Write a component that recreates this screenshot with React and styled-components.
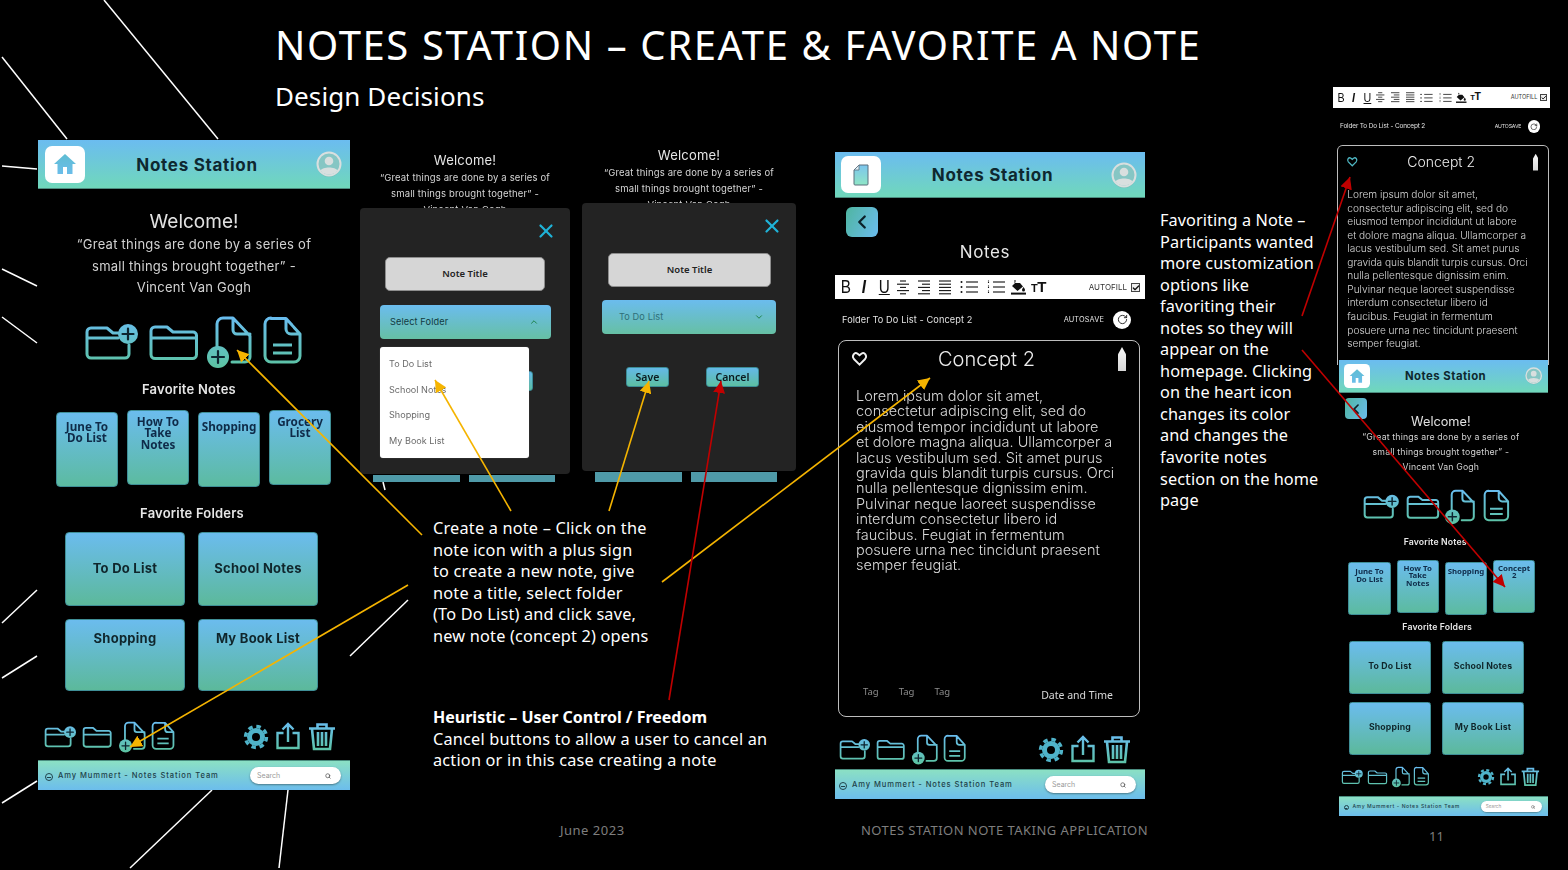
import React from 'react';
import styled, { createGlobalStyle } from 'styled-components';
import { X, ChevronUp, ChevronDown, ChevronLeft, Search, RotateCw, Check } from 'lucide-react';

const Global = createGlobalStyle`
  html, body { margin: 0; padding: 0; background: #000; width: 1568px; height: 870px; overflow: hidden; }
  * { box-sizing: border-box; }
`;

const BLUE = '#69bdf0';
const GREEN = '#5cc3a2';
const SANS = '"Noto Sans", "Liberation Sans", sans-serif';
const MOCK = 'Inter, "Noto Sans", sans-serif';

const Slide = styled.main`
  position: relative; width: 1568px; height: 870px; background: #000; color: #fff;
  font-family: ${SANS}; overflow: hidden;
`;
const Heading = styled.header`padding: 20px 0 0 275px;`;
const Title = styled.h1`
  margin: 0; font-size: 40px; line-height: 50px; font-weight: 400; letter-spacing: 1.6px; white-space: nowrap;
`;
const Subtitle = styled.h2`
  margin: 1px 0 0; font-size: 26px; line-height: 50px; font-weight: 400; letter-spacing: .1px; white-space: nowrap;
`;
const Placed = styled.div`
  position: absolute; left: ${p => p.$x}px; top: ${p => p.$y}px;
`;
const Scaled = styled.div`zoom: ${p => p.$zoom || 1}; filter: blur(.3px);`;
const Lines = styled.div`
  font-size: 16.3px; line-height: 21.55px; white-space: nowrap; letter-spacing: ${p => p.$ls}px;
  span { display: block; }
  strong { display: block; font-weight: 700; font-size: 16px; letter-spacing: 0; }
`;
const Muted = styled.div`color: #7e7e7e; font-size: 13px; letter-spacing: ${p => p.$ls || 0}px; white-space: nowrap;`;

const Overlay = styled.svg`position: absolute; left: 0; top: 0; width: 1568px; height: 870px; pointer-events: none;`;
const Defs = styled.svg`position: absolute; width: 0; height: 0;`;

/* phone frame */
const Phone = styled.section`
  width: ${p => p.$w}px; height: ${p => p.$h}px; display: flex; flex-direction: column;
`;
const AppBar = styled.div`
  height: ${p => p.$h}px; flex: none; display: flex; align-items: center; justify-content: space-between;
  padding: 0 8px 0 ${p => p.$pl}px; background: linear-gradient(#6bbcf0, #70d8bb);
  border-bottom: 1px solid #4d8c80;
`;
const HomeTile = styled.div`
  width: 40px; height: 37px; background: #fff; border-radius: 7px; display: grid; place-items: center; flex: none;
`;
const AppTitle = styled.div`
  flex: 1; text-align: center; padding-right: 7px; padding-top: 1px; font: 700 17px/20px ${MOCK}; color: #0e2830; letter-spacing: .7px;
`;
const Back = styled.div`
  width: ${p => p.$w}px; height: ${p => p.$h}px; margin: ${p => p.$mt}px 0 ${p => p.$mb}px ${p => p.$ml}px;
  border-radius: 6px; background: linear-gradient(115deg, #4fb5a0, #6bbcee); display: grid; place-items: center;
  color: #0c2129; flex: none;
`;
const Welcome = styled.div`
  margin-top: ${p => p.$mt}px; text-align: center; font: 400 19px/24px ${MOCK}; color: #e2e2e2; padding-right: ${p => p.$pr}px;
`;
const Quote = styled.div`
  text-align: center; font: 400 13px/${p => p.$lh}px ${MOCK}; color: #d2d2d2; letter-spacing: .25px;
  padding-right: ${p => p.$pr}px;
  span { display: block; }
`;
const IconRow = styled.div`
  display: flex; justify-content: ${p => p.$j || 'flex-start'}; align-items: flex-start; flex: none;
  margin-top: ${p => p.$mt}px; padding: ${p => p.$pad || 0};
`;
const IconGroup = styled.div`display: flex; align-items: flex-start; gap: ${p => p.$gap}px;`;
const Svg = styled.svg`display: block; flex: none; overflow: visible; margin-left: ${p => p.$ml || 0}px;`;
const SectionLabel = styled.div`
  margin-top: ${p => p.$mt}px; text-align: center; font: 600 13px/18px ${MOCK}; color: #e6e6e6; letter-spacing: .2px;
  padding-right: ${p => p.$pr || 0}px;
`;
const NotesLabel = styled.div`
  margin-top: 3px; padding-right: 10px; text-align: center; font: 400 17px/25px ${MOCK}; color: #e8e8e8; letter-spacing: .6px;
`;
const TileRow = styled.div`
  display: flex; gap: 9px; align-items: flex-start; margin-top: ${p => p.$mt}px; padding-left: ${p => p.$pl}px; flex: none;
`;
const Tile = styled.div`
  width: ${p => p.$w}px; height: ${p => p.$h}px; margin-top: ${p => p.$lift ? 0 : 2}px; border-radius: 4px;
  background: linear-gradient(#6bbcee, #5cbba0); border: 1px solid #3f8f97;
  padding-top: ${p => p.$lift ? 5 : 8}px; text-align: center; font: 700 11.7px/11.5px ${SANS}; color: #0f2b49;
  span { display: block; }
`;
const CardGrid = styled.div`
  display: grid; grid-template-columns: repeat(2, ${p => p.$w}px); column-gap: ${p => p.$cg}px; row-gap: 13px;
  margin-top: ${p => p.$mt}px; padding-left: ${p => p.$pl}px; flex: none;
`;
const FolderCard = styled.div`
  height: ${p => p.$h}px; border-radius: 4px; background: linear-gradient(#6bbcee, #5cb99b); border: 1px solid #3f8f97;
  display: flex; justify-content: center; align-items: ${p => p.$top ? 'flex-start' : 'center'};
  padding-top: ${p => p.$top ? 10 : 0}px; padding-bottom: ${p => p.$top ? 0 : 2}px; font: 700 13px/16px ${MOCK}; color: #10262c; letter-spacing: .25px;
`;
const BottomBar = styled.footer`
  margin-top: auto; height: 30px; flex: none; display: flex; align-items: center; gap: 5px; padding: 0 9px 0 ${p => p.$pl}px;
  background: linear-gradient(#8be0c4, #6cbdec); border-top: 1px solid #4a8d80;
`;
const BarDot = styled.span`
  position: relative; width: 8px; height: 8px; border-radius: 50%; border: 1px solid #20424a; margin-top: 3px; flex: none;
  &::after { content: ''; position: absolute; left: 1px; right: 1px; top: 2.5px; height: 1px; background: #20424a; }
`;
const BarText = styled.span`
  flex: 1; font: 500 7.6px/10px ${MOCK}; letter-spacing: .9px; color: #1d3f49; white-space: nowrap;
`;
const SearchPill = styled.div`
  width: 91px; height: 17px; border-radius: 9px; background: #fff; box-shadow: 0 1px 2px #4b7b8b; display: flex;
  align-items: center; justify-content: space-between; padding: 0 10px 0 7px; font: 400 7px/10px ${MOCK}; color: #9a9a9a; flex: none;
`;

/* modal */
const Greeting = styled.div`width: ${p => p.$w}px; text-align: center; color: #e6e6e6;`;
const GreetTitle = styled.div`font: 400 13px/20px ${MOCK}; letter-spacing: .2px;`;
const GreetLines = styled.div`
  font: 400 9.5px/16px ${MOCK}; color: #d5d5d5; letter-spacing: .15px; white-space: nowrap;
  span { display: block; }
`;
const Dialog = styled.div`
  position: relative; width: ${p => p.$w}px; height: ${p => p.$h}px; margin-top: -10px; background: #232323; border-radius: 4px;
  padding-top: 12px; display: flex; flex-direction: column;
`;
const Close = styled.div`align-self: flex-end; margin-right: 13px; height: 18px; color: #1fb3d8; display: flex;`;
const TitleInput = styled.div`
  margin: ${p => p.$mt}px 0 0 ${p => p.$ml}px; width: ${p => p.$w}px; height: 34px; background: #d6d6d6; border: 1px solid #8d8d8d;
  border-radius: 5px; display: grid; place-items: center; font: 600 9.5px/12px ${SANS}; color: #232323;
`;
const SelectBox = styled.div`
  margin: ${p => p.$mt}px 0 0 20px; width: ${p => p.$w}px; height: 34px; border-radius: 4px;
  background: linear-gradient(#6bbcee, #66c0a4); display: flex; align-items: center; justify-content: space-between;
  padding: 0 12px 0 ${p => p.$pl}px; font: 400 9.2px/12px ${MOCK}; color: ${p => p.$c}; letter-spacing: .1px;
`;
const Actions = styled.div`display: flex; gap: 37px; margin: ${p => p.$mt}px 0 0 ${p => p.$ml}px;`;
const ActionBtn = styled.div`
  width: ${p => p.$w}px; height: 20px; border-radius: 3px; background: linear-gradient(#64b8e8, #5cbfa2); border: 1px solid #3b8c96;
  display: grid; place-items: center; font: 600 10.5px/12px ${SANS}; color: #0b1a20;
`;
const Menu = styled.div`
  position: absolute; left: 20px; top: 139px; width: 149px; height: 111px; background: #fff; border-radius: 3px; padding: 4px 9px;
  box-shadow: 0 0 1px #777;
`;
const MenuItem = styled.div`font: 400 9.1px/25.7px ${MOCK}; color: #6a6a6a;`;
const Stubs = styled.div`display: flex; gap: 9px; margin: ${p => p.$mt}px 0 0 13px;`;
const Stub = styled.div`width: 86.5px; height: ${p => p.$h}px; background: #4f9aa8;`;

/* note editor */
const Toolbar = styled.div`
  height: ${p => p.$h}px; width: 310px; margin-top: ${p => p.$mt}px; flex: none; background: #fff; display: flex; align-items: center;
  padding: 0 5px; color: #111; gap: 9px;
`;
const Fmt = styled.span`
  font: ${p => p.$i ? 'italic' : 'normal'} 400 18px/20px "Liberation Sans", sans-serif; width: 10px; text-align: center;
  text-decoration: ${p => p.$u ? 'underline' : 'none'}; transform: scaleX(.85); font-weight: ${p => p.$i ? 700 : 400};
`;
const BigT = styled.span`
  margin-left: -4px; font: 700 15px/15px "Liberation Sans", sans-serif; letter-spacing: -.5px; small { font-size: 11px; }
`;
const Autofill = styled.span`
  margin-left: auto; display: flex; align-items: center; gap: 4px; font: 400 8px/10px ${MOCK}; color: #333;
`;
const CheckBox = styled.span`
  width: 9px; height: 9px; border: 1px solid #444; display: grid; place-items: center; background: #eee; color: #111;
`;
const PathRow = styled.div`
  height: ${p => p.$h}px; display: flex; align-items: center; justify-content: space-between; padding: 0 14px 0 ${p => p.$pl}px;
  font: 400 9.2px/12px ${MOCK}; color: #e2e2e2; letter-spacing: ${p => p.$ls}px; white-space: nowrap; flex: none;
`;
const AutoSave = styled.span`display: flex; align-items: center; gap: 9px; font-size: 7.4px;`;
const SaveDot = styled.span`
  width: 18px; height: 18px; border-radius: 50%; background: #fff; color: #222; display: grid; place-items: center;
`;
const NoteCard = styled.article`
  margin-left: ${p => p.$ml}px; width: 302px; height: ${p => p.$h}px; display: flex; flex-direction: column; flex: none;
  border: 1px solid #bdbdbd; border-radius: 8px; ${p => p.$open ? 'border-bottom: 0; border-radius: 8px 8px 0 0;' : ''}
`;
const NoteHead = styled.div`
  height: 24px; margin-top: ${p => p.$mt}px; display: flex; align-items: center; justify-content: space-between; padding: 0 13px; flex: none;
`;
const NoteName = styled.div`
  flex: 1; text-align: center; padding-right: 12px; font: 300 20px/24px ${MOCK}; color: #ececec;
`;
const Pencil = styled.div`
  width: 8px; height: 24px; background: linear-gradient(#f8f8f8, #d6d6d6); clip-path: polygon(50% 0, 100% 30%, 100% 100%, 0 100%, 0 30%);
`;
const NoteBody = styled.div`
  margin-top: ${p => p.$mt}px; padding-left: ${p => p.$pl}px; font: 300 ${p => p.$fs}px/${p => p.$lh}px ${MOCK}; color: #d8d8d8;
  white-space: nowrap; span { display: block; }
`;
const NoteMeta = styled.div`
  margin-top: auto; display: flex; justify-content: space-between; align-items: flex-end; padding: 0 26px 15px 24px;
  font: 400 10.5px/12px ${SANS}; color: #d8d8d8;
`;
const Tags = styled.div`display: flex; gap: 20px; padding-bottom: 3px; font-size: 9.5px; color: #8d8d8d;`;

const QUOTE = ['“Great things are done by a series of', 'small things brought together” -', 'Vincent Van Gogh'];
const BODY = [
  'Lorem ipsum dolor sit amet,', 'consectetur adipiscing elit, sed do', 'eiusmod tempor incididunt ut labore',
  'et dolore magna aliqua. Ullamcorper a', 'lacus vestibulum sed. Sit amet purus', 'gravida quis blandit turpis cursus. Orci',
  'nulla pellentesque dignissim enim.', 'Pulvinar neque laoreet suspendisse', 'interdum consectetur libero id',
  'faucibus. Feugiat in fermentum', 'posuere urna nec tincidunt praesent', 'semper feugiat.',
];

const NAVY = '#0d2530';
const FolderPlusIcon = ({ h }) => (
  <Svg width={h} height={h} viewBox="0 0 52 52" fill="none" stroke="url(#g52)" strokeWidth="3" strokeLinecap="round" strokeLinejoin="round">
    <path d="M34 16H27L21 11H5a4 4 0 0 0-4 4V37a4 4 0 0 0 4 4H39a4 4 0 0 0 4-4V28M2 21H32" />
    <circle cx="42" cy="17" r="10" fill="url(#g52)" stroke="none" />
    <path d="M42 11.5V22.5M36.5 17H47.5" stroke={NAVY} strokeWidth="2.2" />
  </Svg>
);
const FolderIcon = ({ h, ml }) => (
  <Svg $ml={ml} width={48 * h / 52} height={h} viewBox="0 0 48 52" fill="none" stroke="url(#g52)" strokeWidth="3" strokeLinejoin="round">
    <path d="M5 10H17L23 15H43a3.5 3.5 0 0 1 3.5 3.5V37.5a4 4 0 0 1-4 4H5a4 4 0 0 1-4-4V14a4 4 0 0 1 4-4ZM1 21H46" />
  </Svg>
);
const FilePlusIcon = ({ h, ml }) => (
  <Svg $ml={ml} width={44 * h / 52} height={h} viewBox="0 0 44 52" fill="none" stroke="url(#g52)" strokeWidth="3" strokeLinejoin="round" strokeLinecap="round">
    <path d="M10 30V7a6 6 0 0 1 6-6H26L43 19V40a5 5 0 0 1-5 5H25M26 1V13a4 4 0 0 0 4 4H43" />
    <circle cx="11" cy="40" r="11" fill="url(#g52)" stroke="none" />
    <path d="M11 34V46M5 40H17" stroke={NAVY} strokeWidth="2.2" />
  </Svg>
);
const FileIcon = ({ h, ml }) => (
  <Svg $ml={ml} width={37 * h / 52} height={h} viewBox="0 0 37 52" fill="none" stroke="url(#g52)" strokeWidth="3" strokeLinejoin="round">
    <path d="M7 1.5H22L36 17V39a6 6 0 0 1-6 6H7a6 6 0 0 1-6-6V7a6 6 0 0 1 6-6ZM22 1.5V12a5 5 0 0 0 5 5H36M9 28H28M9 36H28" />
  </Svg>
);
const GearIcon = () => (
  <Svg width="24" height="30" viewBox="0 0 24 30" fill="none" stroke="#4fb3c9">
    <circle cx="12" cy="15" r="6.5" strokeWidth="5" />
    <circle cx="12" cy="15" r="10.5" strokeWidth="3.4" strokeDasharray="4.5 3.75" />
  </Svg>
);
const ShareIcon = () => (
  <Svg width="24" height="30" viewBox="0 0 24 30" fill="none" stroke="url(#g30)" strokeWidth="2.4">
    <path d="M7.5 11H1.5V26H22.5V11H16.5M12 20V2M6.5 7.5L12 2L17.5 7.5" />
  </Svg>
);
const TrashIcon = () => (
  <Svg width="28" height="30" viewBox="0 0 28 30" fill="none" stroke="url(#g30)" strokeWidth="2.6">
    <path d="M1 6.5H27M9.5 6V2.5H18.5V6M4 7L6 27H22L24 7M10 10V24M14 10V24M18 10V24" />
  </Svg>
);
const HomeIcon = () => (
  <Svg width="24" height="24" viewBox="0 0 24 24"><path fill="url(#g24)" d="M12 2L1 12h3.5v10H10v-7h4v7h5.5V12H23z" /></Svg>
);
const TinyFile = () => (
  <Svg width="17" height="22" viewBox="0 0 17 22">
    <path fill="url(#gmint)" stroke="#5a6f7d" strokeWidth="1" d="M6 1H15V20a1 1 0 0 1-1 1H2a1 1 0 0 1-1-1V6Z" />
    <path fill="#dfeff5" stroke="#5a6f7d" strokeWidth=".8" d="M6 1V6H1Z" />
  </Svg>
);
const Avatar = () => (
  <Svg width="26" height="26" viewBox="0 0 26 26">
    <circle cx="13" cy="14" r="12" fill="#7f9f98" opacity=".35" />
    <circle cx="13" cy="13" r="11.5" fill="#86c6c4" stroke="#d9dfdf" strokeWidth="2" />
    <circle cx="13" cy="10" r="4.3" fill="#d9dfdf" />
    <path d="M4.5 19.5c2-4 15-4 17 0a11 11 0 0 1-17 0Z" fill="#d9dfdf" />
  </Svg>
);
const Heart = ({ color }) => (
  <Svg width="15" height="14" viewBox="0 0 24 22" fill="none" stroke={color} strokeWidth="3">
    <path d="M12 20L3 11C-1 6 4-1 9 2.5L12 5L15 2.5C20-1 25 6 21 11Z" />
  </Svg>
);

const Bars = ({ rows, w = 12 }) => (
  <Svg width={w} height="15" viewBox={`0 0 ${w} 15`} stroke="#111" strokeWidth="1.1">
    {rows.map(([a, b], i) => <line key={i} x1={a} x2={b} y1={1 + i * 3.2} y2={1 + i * 3.2} />)}
  </Svg>
);
const ListGlyph = ({ numbered }) => (
  <Svg width="18" height="14" viewBox="0 0 18 14" stroke="#111" strokeWidth="1.1">
    {[2, 7, 12].map(y => (
      <g key={y}>
        {numbered
          ? <path d={`M1.5 ${y - 1.6}V${y + 1.6}`} strokeDasharray="1 .6" />
          : <circle cx="1.5" cy={y} r="1" fill="#111" stroke="none" />}
        <line x1="6" x2="18" y1={y} y2={y} />
      </g>
    ))}
  </Svg>
);
const Bucket = () => (
  <Svg $ml={-3} width="15" height="16" viewBox="0 0 15 16">
    <path fill="#111" d="M4 1L5 2L3 4L9 4L12 7.5L6.5 12L1 7L4.5 3.5L3 2ZM12.5 8c1 1.5 1.5 2.2 1.5 3a1.4 1.4 0 0 1-3 0c0-.8.5-1.5 1.5-3Z" />
    <rect x="0" y="13.6" width="15" height="2" fill="#111" />
  </Svg>
);

const Format = ({ h, mt }) => (
  <Toolbar $h={h} $mt={mt}>
    <Fmt>B</Fmt><Fmt $i>I</Fmt><Fmt $u>U</Fmt>
    <Bars rows={[[3, 9], [0, 12], [3, 9], [0, 12], [3, 9]]} />
    <Bars rows={[[0, 12], [4, 12], [0, 12], [4, 12], [0, 12]]} />
    <Bars rows={[[0, 12], [0, 12], [0, 12], [0, 12], [0, 12]]} />
    <ListGlyph /><ListGlyph numbered /><Bucket />
    <BigT><small>T</small>T</BigT>
    <Autofill>AUTOFILL<CheckBox><Check size={8} strokeWidth={4} /></CheckBox></Autofill>
  </Toolbar>
);

const Editor = ({ heartColor, toolbarMt = 0, pathH, pathPl, pathLs, cardMl, cardH, headMt, bodyMt, bodyPl, lh, open, toolbarH }) => (
  <>
    <Format h={toolbarH} mt={toolbarMt} />
    <PathRow $h={pathH} $pl={pathPl} $ls={pathLs}>
      <span>Folder To Do List - Concept 2</span>
      <AutoSave>AUTOSAVE<SaveDot><RotateCw size={11} strokeWidth={2} /></SaveDot></AutoSave>
    </PathRow>
    <NoteCard $ml={cardMl} $h={cardH} $open={open}>
      <NoteHead $mt={headMt}>
        <Heart color={heartColor} />
        <NoteName>Concept 2</NoteName>
        <Pencil />
      </NoteHead>
      <NoteBody $mt={bodyMt} $pl={bodyPl} $fs={14.5} $lh={lh}>
        {BODY.map(l => <span key={l}>{l}</span>)}
      </NoteBody>
      {!open && (
        <NoteMeta>
          <Tags><span>Tag</span><span>Tag</span><span>Tag</span></Tags>
          <span>Date and Time</span>
        </NoteMeta>
      )}
    </NoteCard>
  </>
);

const Tools = ({ h = 31, mt, pad }) => (
  <IconRow $mt={mt} $pad={pad} $j="space-between">
    <IconGroup $gap={7}>
      <FolderPlusIcon h={h} /><FolderIcon h={h} /><FilePlusIcon h={h} /><FileIcon h={h} />
    </IconGroup>
    <IconGroup $gap={8}>
      <GearIcon /><ShareIcon /><TrashIcon />
    </IconGroup>
  </IconRow>
);

const Footer = ({ pl = 7 }) => (
  <BottomBar $pl={pl}>
    <BarDot />
    <BarText>Amy Mummert - Notes Station Team</BarText>
    <SearchPill>Search<Search size={6} strokeWidth={3} color="#555" /></SearchPill>
  </BottomBar>
);

const HomeScreen = ({ s, fourth }) => (
  <Phone $w={312} $h={s.h}>
    <AppBar $h={49} $pl={7}>
      <HomeTile><HomeIcon /></HomeTile>
      <AppTitle>Notes Station</AppTitle>
      <Avatar />
    </AppBar>
    {s.back && <Back $w={33} $h={31} $mt={8} $mb={-8} $ml={9}><ChevronLeft size={24} strokeWidth={2.5} /></Back>}
    <Welcome $mt={s.welcome} $pr={s.textPr}>Welcome!</Welcome>
    <Quote $lh={s.quoteLh} $pr={s.textPr}>{QUOTE.map(l => <span key={l}>{l}</span>)}</Quote>
    <IconRow $mt={s.icons} $pad={s.iconPad}>
      <FolderPlusIcon h={52} />
      <FolderIcon h={52} ml={12} />
      <FilePlusIcon h={52} ml={9} />
      <FileIcon h={52} ml={13} />
    </IconRow>
    <SectionLabel $mt={s.favNotes} $pr={s.labelPr}>Favorite Notes</SectionLabel>
    <TileRow $mt={s.tiles} $pl={s.tilePl}>
      <Tile $w={s.tileW} $h={s.tileH}><span>June To</span><span>Do List</span></Tile>
      <Tile $w={s.tileW} $h={s.tileH} $lift><span>How To</span><span>Take</span><span>Notes</span></Tile>
      <Tile $w={s.tileW} $h={s.tileH}><span>Shopping</span></Tile>
      <Tile $w={s.tileW} $h={s.tileH} $lift>{fourth.map(l => <span key={l}>{l}</span>)}</Tile>
    </TileRow>
    <SectionLabel $mt={s.favFolders} $pr={s.labelPr - 6}>Favorite Folders</SectionLabel>
    <CardGrid $mt={s.cards} $pl={s.cardPl} $w={s.cardW} $cg={s.cardGap}>
      <FolderCard $h={s.row1}>To Do List</FolderCard>
      <FolderCard $h={s.row1}>School Notes</FolderCard>
      <FolderCard $h={s.row2} $top={s.topText}>Shopping</FolderCard>
      <FolderCard $h={s.row2} $top={s.topText}>My Book List</FolderCard>
    </CardGrid>
    <Tools mt={s.tools} pad={s.toolPad} />
    <Footer />
  </Phone>
);

const Modal = ({ at, w, h, input, select, actions, stubMt, stubH, children }) => (
  <Placed $x={at.x} $y={at.y}>
    <Scaled>
      <Greeting $w={w}>
        <GreetTitle>Welcome!</GreetTitle>
        <GreetLines>{QUOTE.map(l => <span key={l}>{l}</span>)}</GreetLines>
      </Greeting>
      <Dialog $w={w} $h={h}>
        <Close><X size={22} strokeWidth={2.4} /></Close>
        <TitleInput $mt={input.mt} $ml={input.ml} $w={input.w}>Note Title</TitleInput>
        {select}
        <Actions $mt={actions.mt} $ml={actions.ml}>
          <ActionBtn $w={43}>Save</ActionBtn>
          <ActionBtn $w={53}>Cancel</ActionBtn>
        </Actions>
        {children}
      </Dialog>
      <Stubs $mt={stubMt}><Stub $h={stubH} /><Stub $h={stubH} /></Stubs>
    </Scaled>
  </Placed>
);

const LEFT = {
  h: 650, back: false, welcome: 21, textPr: 0, quoteLh: 21.5, icons: 18, iconPad: '0 0 0 48px', favNotes: 11, labelPr: 10, tiles: 12, tilePl: 18,
  tileW: 62, tileH: 75, favFolders: 17, cards: 10, cardPl: 27, cardW: 120, cardGap: 13, row1: 74, row2: 72, topText: true,
  tools: 31, toolPad: '0 14px 0 7px',
};
const RIGHT = {
  h: 681, back: true, welcome: 0, textPr: 8, quoteLh: 23, icons: 21, iconPad: '0 0 0 38px', favNotes: 16, labelPr: 25, tiles: 19, tilePl: 14,
  tileW: 63, tileH: 79, favFolders: 10, cards: 12, cardPl: 15, cardW: 122, cardGap: 17, row1: 78, row2: 78, topText: false,
  tools: 18, toolPad: '0 12px 0 5px',
};

const WHITE_LINES = [
  [2, 57, 67, 139], [104, 0, 218, 139], [2, 166, 37, 169], [2, 269, 37, 286], [2, 317, 37, 343], [2, 623, 37, 590],
  [2, 678, 37, 656], [2, 803, 37, 781], [130, 868, 212, 790], [279, 868, 288, 790], [350, 656, 408, 600], [383, 482, 385, 490],
];
const ARROWS = [
  [422, 535, 237, 350, 'y'], [408, 585, 130, 747, 'y'], [511, 511, 435, 380, 'y'], [609, 511, 649, 381, 'y'], [662, 582, 930, 378, 'y'],
  [669, 700, 721, 381, 'r'], [1302, 316, 1350, 177, 'r'], [1302, 350, 1505, 587, 'r'],
];

export default function App() {
  return (
    <Slide>
      <Global />
      <Defs aria-hidden="true">
        <defs>
          <linearGradient id="g52" gradientUnits="userSpaceOnUse" x1="0" y1="0" x2="0" y2="50"><stop stopColor={BLUE} /><stop offset="1" stopColor={GREEN} /></linearGradient>
          <linearGradient id="g30" gradientUnits="userSpaceOnUse" x1="0" y1="0" x2="0" y2="30"><stop stopColor={BLUE} /><stop offset="1" stopColor={GREEN} /></linearGradient>
          <linearGradient id="g24" gradientUnits="userSpaceOnUse" x1="0" y1="0" x2="0" y2="24"><stop stopColor="#5dbdd0" /><stop offset="1" stopColor="#6cbdec" /></linearGradient>
          <linearGradient id="gmint" x1="0" y1="0" x2="0" y2="1"><stop stopColor="#7cc5ee" /><stop offset="1" stopColor="#8fe6c6" /></linearGradient>
          <marker id="ay" markerUnits="userSpaceOnUse" markerWidth="13" markerHeight="12" refX="12" refY="6" orient="auto"><path d="M0 0L12 6L0 12Z" fill="#f5b400" /></marker>
          <marker id="ar" markerUnits="userSpaceOnUse" markerWidth="13" markerHeight="12" refX="12" refY="6" orient="auto"><path d="M0 0L12 6L0 12Z" fill="#c00000" /></marker>
        </defs>
      </Defs>

      <Overlay aria-hidden="true">
        {WHITE_LINES.map(([a, b, c, d]) => <line key={`${a}-${b}`} x1={a} y1={b} x2={c} y2={d} stroke="#fff" strokeWidth="1.5" />)}
      </Overlay>

      <Heading>
        <Title>NOTES STATION – CREATE &amp; FAVORITE A NOTE</Title>
        <Subtitle>Design Decisions</Subtitle>
      </Heading>

      <Placed $x={38} $y={140}>
        <Scaled><HomeScreen s={LEFT} fourth={['Grocery', 'List']} /></Scaled>
      </Placed>

      <Modal
        at={{ x: 360, y: 150 }} w={210} h={266} input={{ mt: 19, ml: 25, w: 160 }} actions={{ mt: 32, ml: 40 }} stubMt={1} stubH={7}
        select={<SelectBox $mt={14} $w={171} $pl={10} $c="#123a3f">Select Folder<ChevronUp size={10} color="#173" /></SelectBox>}
      >
        <Menu>
          <MenuItem>To Do List</MenuItem><MenuItem>School Notes</MenuItem><MenuItem>Shopping</MenuItem><MenuItem>My Book List</MenuItem>
        </Menu>
      </Modal>
      <Modal
        at={{ x: 582, y: 145 }} w={214} h={268} input={{ mt: 20, ml: 26, w: 163 }} actions={{ mt: 33, ml: 44 }} stubMt={1} stubH={10}
        select={<SelectBox $mt={13} $w={174} $pl={17} $c="#2f6f7a">To Do List<ChevronDown size={10} color="#173" /></SelectBox>}
      />

      <Placed $x={835} $y={152}>
        <Scaled>
          <Phone $w={310} $h={647}>
            <AppBar $h={46} $pl={6}>
              <HomeTile><TinyFile /></HomeTile>
              <AppTitle>Notes Station</AppTitle>
              <Avatar />
            </AppBar>
            <Back $w={32} $h={30} $mt={9} $mb={0} $ml={11}><ChevronLeft size={22} strokeWidth={2.5} /></Back>
            <NotesLabel>Notes</NotesLabel>
            <Editor
              heartColor="#f0f0f0" toolbarMt={10} toolbarH={24} pathH={41} pathPl={7} pathLs={0.1} cardMl={3} cardH={377} headMt={6} bodyMt={17} bodyPl={17} lh={15.4}
            />
            <Tools mt={18} pad="0 14px 0 5px" h={30} />
            <Footer pl={4} />
          </Phone>
        </Scaled>
      </Placed>

      <Placed $x={433} $y={518}>
        <Lines $ls={0.2}>
          <span>Create a note – Click on the</span>
          <span>note icon with a plus sign</span>
          <span>to create a new note, give</span>
          <span>note a title, select folder</span>
          <span>(To Do List) and click save,</span>
          <span>new note (concept 2) opens</span>
        </Lines>
      </Placed>
      <Placed $x={433} $y={707}>
        <Lines $ls={0.2}>
          <strong>Heuristic – User Control / Freedom</strong>
          <span>Cancel buttons to allow a user to cancel an</span>
          <span>action or in this case creating a note</span>
        </Lines>
      </Placed>
      <Placed $x={1160} $y={210}>
        <Lines $ls={0.08}>
          <span>Favoriting a Note –</span><span>Participants wanted</span><span>more customization</span><span>options like</span>
          <span>favoriting their</span><span>notes so they will</span><span>appear on the</span><span>homepage. Clicking</span>
          <span>on the heart icon</span><span>changes its color</span><span>and changes the</span><span>favorite notes</span>
          <span>section on the home</span><span>page</span>
        </Lines>
      </Placed>

      <Placed $x={1333} $y={87}>
        <Scaled $zoom={0.7}>
          <Editor
            heartColor="#4fb6c2" toolbarH={30} pathH={53} pathPl={10} pathLs={-0.2} cardMl={6} cardH={314} headMt={11} bodyMt={25} bodyPl={13} lh={19.35} open
          />
        </Scaled>
      </Placed>
      <Placed $x={1339} $y={360}>
        <Scaled $zoom={0.67}><HomeScreen s={RIGHT} fourth={['Concept', '2']} /></Scaled>
      </Placed>

      <Placed $x={560} $y={821}><Muted $ls={0.5}>June 2023</Muted></Placed>
      <Placed $x={861} $y={821}><Muted $ls={0.45}>NOTES STATION NOTE TAKING APPLICATION</Muted></Placed>
      <Placed $x={1429} $y={827}><Muted>11</Muted></Placed>

      <Overlay aria-hidden="true">
        {ARROWS.map(([a, b, c, d, k]) => (
          <line key={`${a}-${b}`} x1={a} y1={b} x2={c} y2={d} stroke={k === 'y' ? '#f5b400' : '#c00000'} strokeWidth="1.6" markerEnd={`url(#a${k})`} />
        ))}
      </Overlay>
    </Slide>
  );
}
